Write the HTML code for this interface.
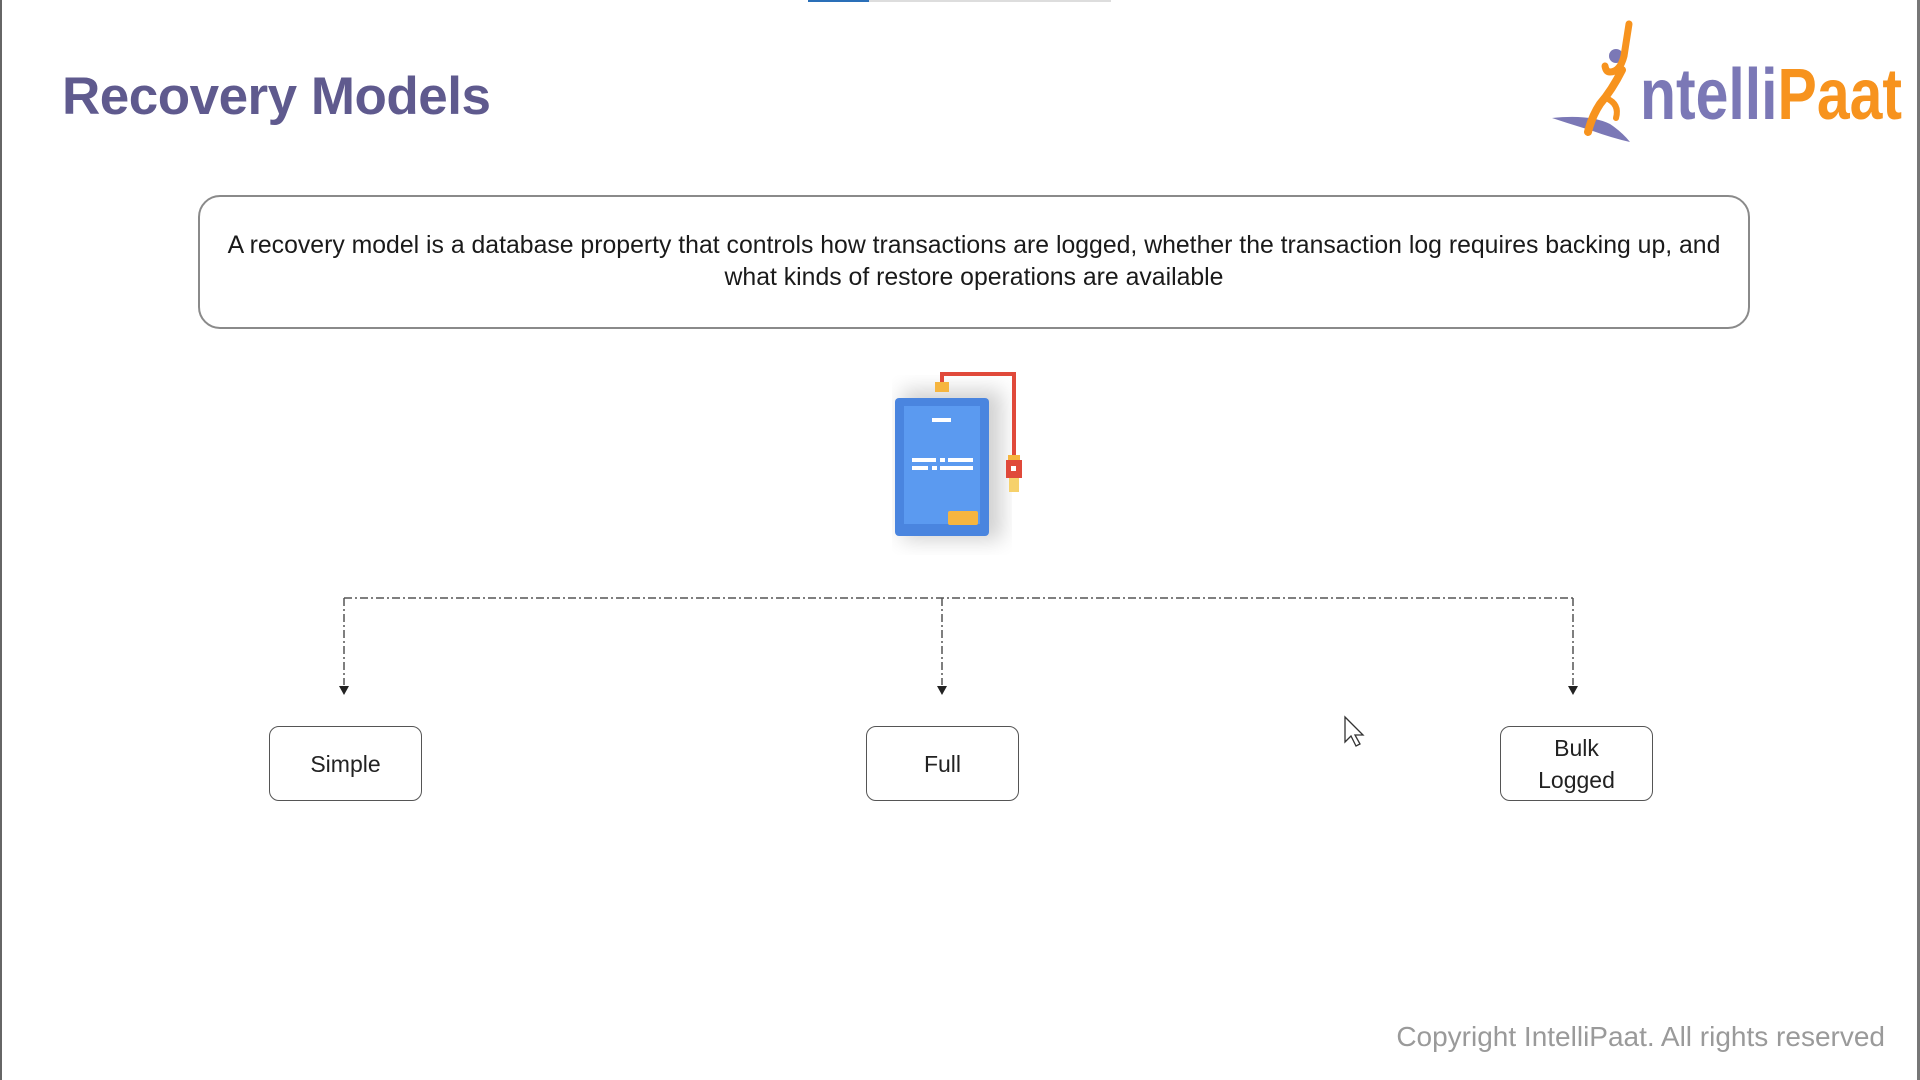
<!DOCTYPE html>
<html><head><meta charset="utf-8"><style>
html,body{margin:0;padding:0}
body{width:1920px;height:1080px;position:relative;background:#fff;overflow:hidden;font-family:"Liberation Sans",sans-serif}
.abs{position:absolute}
.title{left:62px;top:66px;font-size:53px;color:#5f5a8e;font-weight:bold;letter-spacing:-0.5px}
.desc{left:198px;top:195px;width:1552px;height:134px;border:2px solid #8a8a8a;border-radius:22px;box-sizing:border-box;text-align:center;font-size:24.8px;color:#1a1a1a;line-height:32px;padding-top:33px}
.node{border:1.5px solid #555;border-radius:10px;box-sizing:border-box;width:153px;height:75px;display:flex;align-items:center;justify-content:center;text-align:center;font-size:23px;color:#222;line-height:32px}
.copy{right:35px;top:1021px;font-size:28px;color:#9a9a9a}
</style></head><body>
<div class="abs" style="left:0;top:0;width:2px;height:1080px;background:#666"></div>
<div class="abs" style="right:0;top:0;width:3px;height:1080px;background:#777"></div>
<div class="abs" style="left:808px;top:0;width:61px;height:2px;background:#2a6fb8"></div>
<div class="abs" style="left:869px;top:0;width:242px;height:2px;background:#ddd"></div>
<div class="abs title">Recovery Models</div>

<svg class="abs" style="left:1550px;top:20px" width="370" height="130" viewBox="0 0 370 130">
<path d="M2 98 Q40 94 60 104 Q72 112 80 122 Q62 118 40 110 Q20 104 2 98Z" fill="#7b78b6"/>
<circle cx="66" cy="36" r="7" fill="#7b78b6"/>
<path d="M79 4 L74 36 Q70 52 60 52 Q56 52 55 46" stroke="#f7931e" stroke-width="7" fill="none" stroke-linecap="round"/>
<path d="M72 50 Q62 70 50 84 Q42 96 38 112" stroke="#f7931e" stroke-width="8" fill="none" stroke-linecap="round"/>
<path d="M56 78 Q70 84 66 98" stroke="#f7931e" stroke-width="6" fill="none" stroke-linecap="round"/>
<text x="90" y="99" font-family="Liberation Sans" font-weight="bold" font-size="72" fill="#7b78b6" textLength="262" lengthAdjust="spacingAndGlyphs">ntelli<tspan fill="#f7931e">Paat</tspan></text>
</svg>

<div class="abs desc">A recovery model is a database property that controls how transactions are logged, whether the transaction log requires backing up, and<br>what kinds of restore operations are available</div>

<svg class="abs" style="left:880px;top:360px" width="170" height="200" viewBox="0 0 170 200">
<defs><filter id="s"><feGaussianBlur stdDeviation="10"/></filter></defs>
<rect x="22" y="30" width="100" height="150" fill="#000" opacity="0.18" filter="url(#s)"/>
<path d="M62 28 V14 H134 V100" stroke="#e0493a" stroke-width="4" fill="none"/>
<rect x="55" y="22" width="14" height="10" fill="#f6b53f"/>
<rect x="128" y="95" width="12" height="6" fill="#f6b53f"/>
<rect x="126" y="100" width="16" height="18" fill="#e0493a"/>
<rect x="131" y="106" width="5" height="5" fill="#fff"/>
<rect x="129" y="118" width="10" height="14" fill="#f6d16b"/>
<rect x="15" y="38" width="94" height="138" rx="4" fill="#4a85df"/>
<rect x="24" y="46" width="76" height="118" fill="#5b9af0"/>
<rect x="52" y="58" width="19" height="4" fill="#fff"/>
<rect x="32" y="98" width="24" height="4" fill="#fff"/><rect x="60" y="98" width="5" height="4" fill="#fff"/><rect x="68" y="98" width="25" height="4" fill="#fff"/>
<rect x="32" y="106" width="16" height="4" fill="#fff"/><rect x="52" y="106" width="5" height="4" fill="#fff"/><rect x="60" y="106" width="33" height="4" fill="#fff"/>
<rect x="68" y="151" width="30" height="14" rx="2" fill="#f6b53f"/>
</svg>

<svg class="abs" style="left:0;top:0" width="1920" height="1080">
<g stroke="#555" stroke-width="1.5" stroke-dasharray="8 3 2 3" fill="none">
<path d="M344 598 H1573"/>
<path d="M344 598 V685"/><path d="M942 598 V685"/><path d="M1573 598 V685"/>
</g>
<g fill="#222">
<path d="M339 686 L349 686 L344 695Z"/><path d="M937 686 L947 686 L942 695Z"/><path d="M1568 686 L1578 686 L1573 695Z"/>
</g>
<path d="M1345 717 L1345 742 L1351 736 L1356 746 L1360 744 L1355 735 L1363 735 Z" fill="#fff" stroke="#333" stroke-width="1.3"/>
</svg>

<div class="abs node" style="left:269px;top:726px">Simple</div>
<div class="abs node" style="left:866px;top:726px">Full</div>
<div class="abs node" style="left:1500px;top:726px">Bulk<br>Logged</div>

<div class="abs copy">Copyright IntelliPaat. All rights reserved</div>
</body></html>
